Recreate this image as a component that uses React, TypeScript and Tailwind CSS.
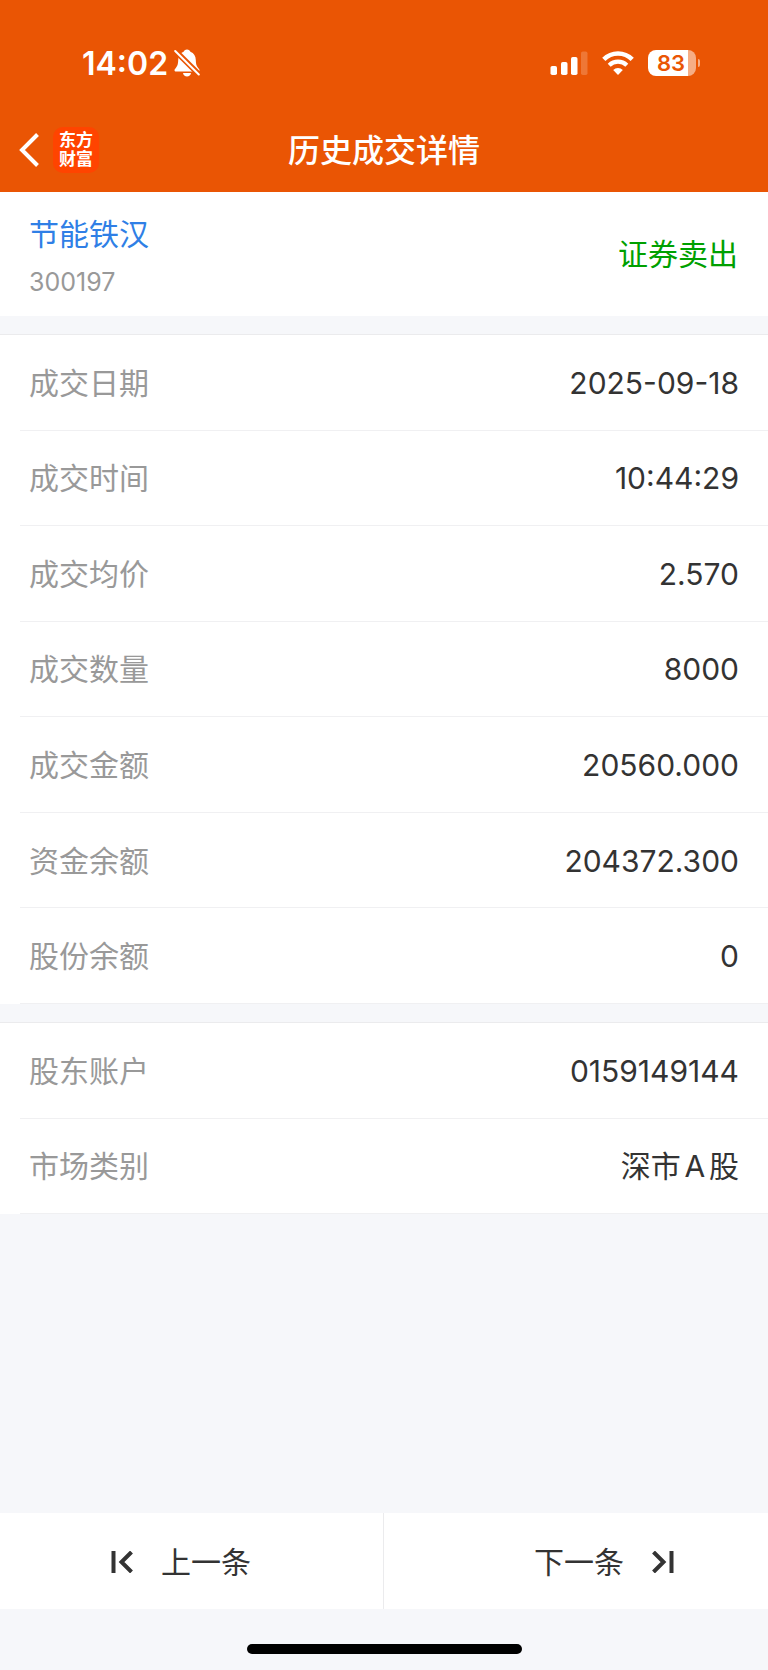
import React from 'react';

interface DetailItem {
  label: string;
  value: string;
}

const tradeDetails: DetailItem[] = [
  { label: '成交日期', value: '2025-09-18' },
  { label: '成交时间', value: '10:44:29' },
  { label: '成交均价', value: '2.570' },
  { label: '成交数量', value: '8000' },
  { label: '成交金额', value: '20560.000' },
  { label: '资金余额', value: '204372.300' },
  { label: '股份余额', value: '0' },
];

const accountDetails: DetailItem[] = [
  { label: '股东账户', value: '0159149144' },
  { label: '市场类别', value: '深市A股' },
];

const BellOffIcon = () => (
  <svg className="h-7 w-[26px]" viewBox="0 0 26 28" fill="none" aria-hidden="true">
    <path
      d="M13 0.5c-1.800 0-3.100 1-3.400 2.300C6 4.200 4.300 7 4.200 11c-.1 4.500-.9 6-2.400 8-.9 1-1.300 1.500-1.300 2.200 0 .8.600 1.300 1.500 1.300h22c.9 0 1.500-.5 1.500-1.300 0-.7-.4-1.200-1.300-2.200-1.500-2-2.300-3.500-2.400-8-.1-4-1.800-6.800-5.400-8.200C16.100 1.500 14.800.5 13 .5z"
      fill="#fff"
    />
    <path d="M9 24h8c-.3 2.200-1.900 3.500-4 3.500S9.300 26.200 9 24z" fill="#fff" />
    <path d="M0 0.500L26 26.500" stroke="#ea5504" strokeWidth="5.500" />
    <path d="M1.200 2L24.800 25.500" stroke="#fff" strokeWidth="2" strokeLinecap="round" />
  </svg>
);

const SignalIcon = () => (
  <svg className="h-6 w-[38px]" viewBox="0 0 38 24" fill="#fff" aria-hidden="true">
    <rect x="0.500" y="15" width="6.500" height="9" rx="1.800" />
    <rect x="11" y="11" width="6.500" height="13" rx="1.800" />
    <rect x="21" y="6" width="6.500" height="18" rx="1.800" />
    <rect x="31" y="0.500" width="6.500" height="23.500" rx="1.800" opacity="0.2" />
  </svg>
);

const WifiIcon = () => (
  <svg className="h-6 w-8" viewBox="0 0 32 24" fill="none" aria-hidden="true">
    <path d="M1.800 8.300a20.200 20.200 0 0 1 28.400 0" stroke="#fff" strokeWidth="4.600" />
    <path d="M7.200 14.200a12.600 12.600 0 0 1 17.600 0" stroke="#fff" strokeWidth="4.200" />
    <path d="M16 24l-4.800-4.900a6.800 6.800 0 0 1 9.600 0z" fill="#fff" />
  </svg>
);

const Battery = () => (
  <div className="flex items-center gap-0.5">
    <div className="flex h-[26px] w-12 items-center justify-center rounded-lg bg-[linear-gradient(to_right,#fff_83%,#f6ad85_83%)] pr-0.5 text-[22px] font-semibold leading-none text-[#ea5504]">
      83
    </div>
    <div className="h-2 w-0.5 rounded-r-full bg-[#f6ad85]" />
  </div>
);

const StatusBar = () => (
  <div className="flex h-[54px] items-center justify-between pl-[82px] pr-[68px]">
    <div className="flex items-center gap-1.5">
      <span className="pt-0.5 text-[32px] font-semibold leading-none">14:02</span>
      <BellOffIcon />
    </div>
    <div className="flex items-center gap-3.5">
      <SignalIcon />
      <WifiIcon />
      <Battery />
    </div>
  </div>
);

const NavBar = () => (
  <nav className="mt-[18px] grid h-[84px] grid-cols-[1fr_auto_1fr] items-center px-[19px]">
    <div className="flex items-center gap-3.5">
      <button type="button" aria-label="返回">
        <svg className="h-[34px] w-5" viewBox="0 0 20 34" fill="none" aria-hidden="true">
          <path d="M18.500 1.500L3 17l15.500 15.500" stroke="#fff" strokeWidth="4" />
        </svg>
      </button>
      <div className="flex size-[46px] flex-col items-center justify-center rounded-[10px] bg-[#ff4400] text-[17px] font-bold leading-[19px]">
        <span>东方</span>
        <span>财富</span>
      </div>
    </div>
    <h1 className="pt-0.5 text-[32px] font-medium leading-none">历史成交详情</h1>
  </nav>
);

const DetailList: React.FC<{ items: DetailItem[]; className: string }> = ({ items, className }) => (
  <dl className={`mt-[18px] grid auto-rows-fr border-t border-[#ebebed] bg-white ${className}`}>
    {items.map((item) => (
      <div
        key={item.label}
        className="ml-5 flex items-center justify-between border-b border-[#f0f0f2] pl-[9px] pr-[29px] pt-0.5 text-[30px]"
      >
        <dt className="text-[#999]">{item.label}</dt>
        <dd className="text-[#333] [text-autospace:normal]">{item.value}</dd>
      </div>
    ))}
  </dl>
);

const App: React.FC = () => {
  return (
    <div className="flex min-h-screen flex-col bg-[#f6f7fa] font-['Inter','Noto_Sans_CJK_SC',sans-serif]">
      <header className="bg-[#ea5504] pt-9 text-white">
        <StatusBar />
        <NavBar />
      </header>

      <main className="flex flex-1 flex-col">
        <section className="flex items-center justify-between bg-white px-[29px] pb-[18px] pt-[22px]">
          <div>
            <a href="#" className="block text-[30px] leading-10 text-[#2f7fe6]">节能铁汉</a>
            <p className="mt-3 text-[25px] leading-8 text-[#999]">300197</p>
          </div>
          <span className="pb-1 pr-px text-[30px] leading-10 text-[#00a000]">证券卖出</span>
        </section>

        <DetailList items={tradeDetails} className="min-h-[670px]" />
        <DetailList items={accountDetails} className="min-h-48" />
      </main>

      <footer>
        <div className="grid h-24 grid-cols-2 bg-white text-[30px] text-[#333]">
          <button type="button" className="flex items-center gap-7 border-r border-[#ebebed] pl-[111px] pt-0.5">
            <svg className="size-[22px]" viewBox="0 0 22 22" fill="none" stroke="currentColor" aria-hidden="true">
              <path d="M2.500 0v22" strokeWidth="4" />
              <path d="M20.500 1L10.500 11l10 10" strokeWidth="4" />
            </svg>
            上一条
          </button>
          <button type="button" className="flex items-center justify-end gap-7 pr-[94px] pt-0.5">
            下一条
            <svg className="size-[22px]" viewBox="0 0 22 22" fill="none" stroke="currentColor" aria-hidden="true">
              <path d="M19.500 0v22" strokeWidth="4" />
              <path d="M1.500 1l10 10-10 10" strokeWidth="4" />
            </svg>
          </button>
        </div>
        <div className="flex h-[61px] items-end justify-center pb-4">
          <div className="h-2.5 w-[275px] rounded-full bg-black" />
        </div>
      </footer>
    </div>
  );
};

export default App;
